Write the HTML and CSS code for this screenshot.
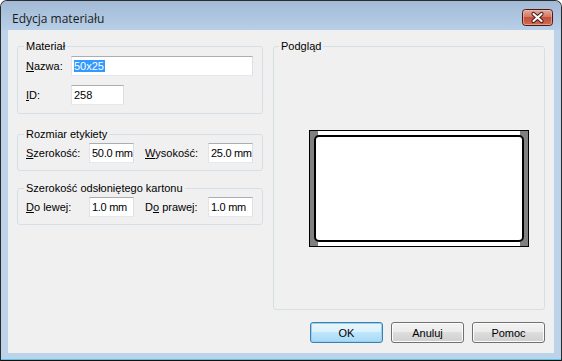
FILE: index.html
```html
<!DOCTYPE html>
<html lang="pl">
<head>
    <meta charset="UTF-8">
    <title>Edycja materiału</title>
    <link rel="stylesheet" href="styles.css">
</head>
<body>
    <div class="window">
        <div class="titlebar">
            <span class="title">Edycja materiału</span>
            <span class="close">
                <svg width="31" height="17" viewBox="0 0 31 17">
                    <defs>
                        <linearGradient id="cg" x1="0" y1="0" x2="0" y2="1">
                            <stop offset="0" stop-color="#e6aa9d"/>
                            <stop offset="0.45" stop-color="#d27a68"/>
                            <stop offset="0.5" stop-color="#c5503c"/>
                            <stop offset="1" stop-color="#cf6e55"/>
                        </linearGradient>
                    </defs>
                    <rect x="0.5" y="0.5" width="30" height="16" rx="3" fill="url(#cg)" stroke="#4f1710"/>
                    <rect x="1.5" y="1.5" width="28" height="14" rx="2" fill="none" stroke="#f3c9bf" stroke-opacity=".55"/>
                    <path d="M11.5 5 L19.5 12 M19.5 5 L11.5 12" stroke="#4a1a14" stroke-width="4.2" stroke-linecap="round"/>
                    <path d="M11.5 5 L19.5 12 M19.5 5 L11.5 12" stroke="#fbfbfb" stroke-width="2.2" stroke-linecap="round"/>
                </svg>
            </span>
        </div>

        <div class="client">
            <div class="panes">
                <div class="left-col">
                    <fieldset class="group group-material">
                        <legend>Materiał</legend>
                        <div class="row">
                            <label class="lbl lbl-short"><u>N</u>azwa:</label>
                            <div class="field field-name"><span class="sel">50x25</span></div>
                        </div>
                        <div class="row row-next">
                            <label class="lbl lbl-short"><u>I</u>D:</label>
                            <div class="field field-id">258</div>
                        </div>
                    </fieldset>

                    <fieldset class="group group-size">
                        <legend>Rozmiar etykiety</legend>
                        <div class="row">
                            <label class="lbl"><u>S</u>zerokość:</label>
                            <div class="field field-num">50.0 mm</div>
                            <label class="lbl lbl-second"><u>W</u>ysokość:</label>
                            <div class="field field-num">25.0 mm</div>
                        </div>
                    </fieldset>

                    <fieldset class="group group-margin">
                        <legend>Szerokość odsłoniętego kartonu</legend>
                        <div class="row">
                            <label class="lbl"><u>D</u>o lewej:</label>
                            <div class="field field-num">1.0 mm</div>
                            <label class="lbl lbl-second">D<u>o</u> prawej:</label>
                            <div class="field field-num">1.0 mm</div>
                        </div>
                    </fieldset>
                </div>

                <fieldset class="group group-preview">
                    <legend>Podgląd</legend>
                    <div class="canvas">
                        <svg width="220" height="117" viewBox="0 0 220 117">
                            <rect x="0.5" y="0.5" width="219" height="116" fill="#fff" stroke="#000"/>
                            <rect x="1" y="1" width="4" height="115" fill="#808080"/>
                            <rect x="215" y="1" width="4" height="115" fill="#808080"/>
                            <rect x="1" y="1" width="8" height="8" fill="#808080"/>
                            <rect x="211" y="1" width="8" height="8" fill="#808080"/>
                            <rect x="1" y="108" width="8" height="8" fill="#808080"/>
                            <rect x="211" y="108" width="8" height="8" fill="#808080"/>
                            <rect x="6" y="6" width="208" height="105" rx="4" fill="#fff" stroke="#000" stroke-width="2"/>
                        </svg>
                    </div>
                </fieldset>
            </div>

            <div class="buttons">
                <button type="button" class="btn btn-default">OK</button>
                <button type="button" class="btn">Anuluj</button>
                <button type="button" class="btn">Pomoc</button>
            </div>
        </div>
    </div>
</body>
</html>
```

FILE: styles.css
```css
body{margin:0;font-family:"Liberation Sans",Arial,sans-serif;font-size:11px;color:#000;background:#fff}

.window{
    width:562px;
    height:361px;
    box-sizing:border-box;
    border:1px solid #2a2a2a;
    border-bottom-color:#111;
    border-radius:7px 7px 0 0;
    background:#bcd3ea;
    display:flex;
    flex-direction:column;
    overflow:hidden;
    box-shadow:inset 0 -1px 0 #57c6e2;
}

.titlebar{
    height:29px;
    flex:none;
    display:flex;
    align-items:flex-start;
    padding:0 8px 0 11px;
    background:linear-gradient(#a2bad5,#b8cfe8);
}
.title{font-family:"Open Sans","Noto Sans",sans-serif;font-size:12px;line-height:16px;margin-top:10px;color:#1b1b1b}
.close{margin-left:auto;margin-top:8px;height:17px;line-height:0}

.client{
    flex:none;
    height:323px;
    margin:0 7px;
    box-sizing:border-box;
    padding:10px 9px 10px 9px;
    background:#f0f0f0;
    display:flex;
    flex-direction:column;
}

.panes{display:flex;gap:10px;height:270px}
.left-col{width:246px;flex:none}

/* group boxes */
.group{
    margin:0;
    padding:0;
    min-width:0;
    box-sizing:border-box;
    border:1px solid #d5dfe5;
    border-radius:3px;
}
.group legend{padding:0 2px;margin-left:6px;font-size:11px;line-height:13px}

.group-material{padding-top:3px;padding-bottom:8px}
.group-size{margin-top:14px;padding-top:2px;padding-bottom:7px}
.group-margin{margin-top:11px;padding-top:2px;padding-bottom:7px}
.group-preview{width:272px;flex:none;height:270px;padding-top:77px}
.group-preview legend{margin-left:5px}

.row{display:flex;align-items:center;height:20px;margin-left:8px}
.row-next{margin-top:9px}

.lbl{width:63px;flex:none;white-space:nowrap}
.lbl-short{width:45px}
.lbl-second{margin-left:11px}

.field{
    height:20px;
    box-sizing:border-box;
    border:1px solid;
    border-color:#abadb3 #dbdfe6 #e3e9ef #e2e3ea;
    background:#fff;
    padding:0 2px;
    line-height:18px;
    white-space:nowrap;
    overflow:hidden;
}
.field-name{width:182px}
.field-id{width:53px}
.field-num{width:45px;letter-spacing:-.3px}
.sel{background:#3399ff;color:#fff;display:inline-block;line-height:12px;padding-right:1px}

.canvas{line-height:0;margin-left:35px}

/* buttons */
.buttons{display:flex;justify-content:flex-end;gap:8px;margin-top:12px}
.btn{
    width:73px;
    height:21px;
    padding:0;
    font-family:"Liberation Sans",Arial,sans-serif;
    font-size:11px;
    color:#000;
    border:1px solid #707070;
    border-radius:3px;
    background:linear-gradient(#f2f2f2 0%,#ebebeb 50%,#dddddd 50%,#cfcfcf 100%);
    box-shadow:inset 0 0 0 1px #fcfcfc;
}
.btn-default{
    border-color:#3c7fb1;
    background:linear-gradient(#eaf6fd 0%,#d9f0fc 50%,#bee6fd 50%,#a7d9f5 100%);
    box-shadow:inset 0 0 0 1px #98d1ef;
}
```
